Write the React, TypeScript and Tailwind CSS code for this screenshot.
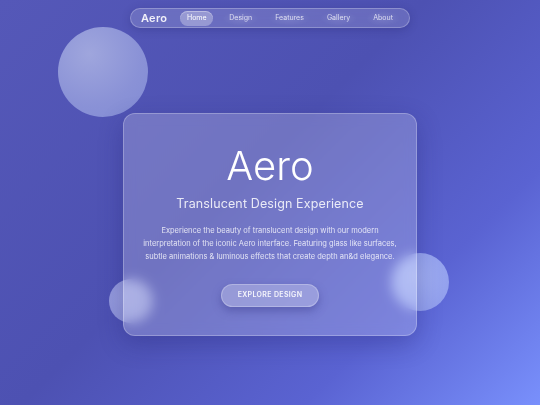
import React from 'react';

const links = ['Home', 'Design', 'Features', 'Gallery', 'About'];

function Nav() {
  return (
    <nav className="flex h-[20px] w-[280px] items-center rounded-full border border-white/25 bg-white/15 pl-[10px] pr-[10px] shadow-[0_2px_8px_rgba(30,30,100,0.25)] backdrop-blur-md">
      <span className="mr-[13px] text-[11px] font-semibold tracking-wide text-white/90">Aero</span>
      <div className="flex items-center gap-[9px]">
        {links.map((link) =>
          link === 'Home' ? (
            <span
              key={link}
              className="flex h-[15px] w-[33px] items-center justify-center rounded-full bg-white/30 text-[7px] text-white shadow-[inset_0_1px_0_rgba(255,255,255,0.35)]"
            >
              {link}
            </span>
          ) : (
            <span
              key={link}
              className="flex h-[15px] items-center rounded-full bg-[radial-gradient(ellipse_at_center,rgba(255,255,255,0.1),transparent_70%)] px-[7px] text-[7px] text-white/75"
            >
              {link}
            </span>
          )
        )}
      </div>
    </nav>
  );
}

export default function App() {
  return (
    <div
      className="relative h-[405px] w-[540px] overflow-hidden bg-[linear-gradient(135deg,#5558b8_0%,#4d51b2_45%,#5a63d2_75%,#7990fc_100%)]"
      style={{ fontFamily: 'Inter, "Noto Sans", sans-serif' }}
    >
      {/* floating spheres */}
      <div className="absolute left-[58px] top-[27px] h-[90px] w-[90px] rounded-full bg-[radial-gradient(circle_at_35%_30%,#a3aadf,#8d95d8_60%,#848ed6)] opacity-95" />
      <div className="absolute left-[391px] top-[253px] h-[58px] w-[58px] rounded-full bg-[radial-gradient(circle_at_40%_40%,#a2b0f2,#8d9bec)]" />
      <div className="absolute left-[109px] top-[279px] h-[44px] w-[44px] rounded-full bg-[radial-gradient(circle_at_40%_40%,#9aa0e0,#8a90d6)]" />

      <div className="relative flex flex-col items-center pt-[8px]">
        <Nav />

        <div className="mt-[85px] flex h-[223px] w-[294px] flex-col items-center rounded-[12px] border border-white/25 bg-white/20 px-[18px] pt-[32px] text-center shadow-[0_8px_24px_rgba(30,30,110,0.3)] backdrop-blur-[6px]">
          <h1 className="text-[40px] font-light leading-none text-white">Aero</h1>
          <p className="mt-[12px] text-[12.5px] leading-none tracking-[0.01em] text-white/85">
            Translucent Design Experience
          </p>
          <p className="mt-[13px] text-[7.5px] leading-[13px] text-white/80">
            Experience the beauty of translucent design with our modern interpretation of the iconic Aero interface. Featuring glass like surfaces, subtle animations &amp; luminous effects that create depth an&amp;d elegance.
          </p>
          <button className="mt-[21px] flex h-[23px] w-[98px] items-center justify-center rounded-full border border-white/25 bg-white/25 text-[7px] font-semibold tracking-wider text-white/90 shadow-[0_4px_10px_rgba(40,40,120,0.35)]">
            EXPLORE DESIGN
          </button>
        </div>
      </div>
    </div>
  );
}
